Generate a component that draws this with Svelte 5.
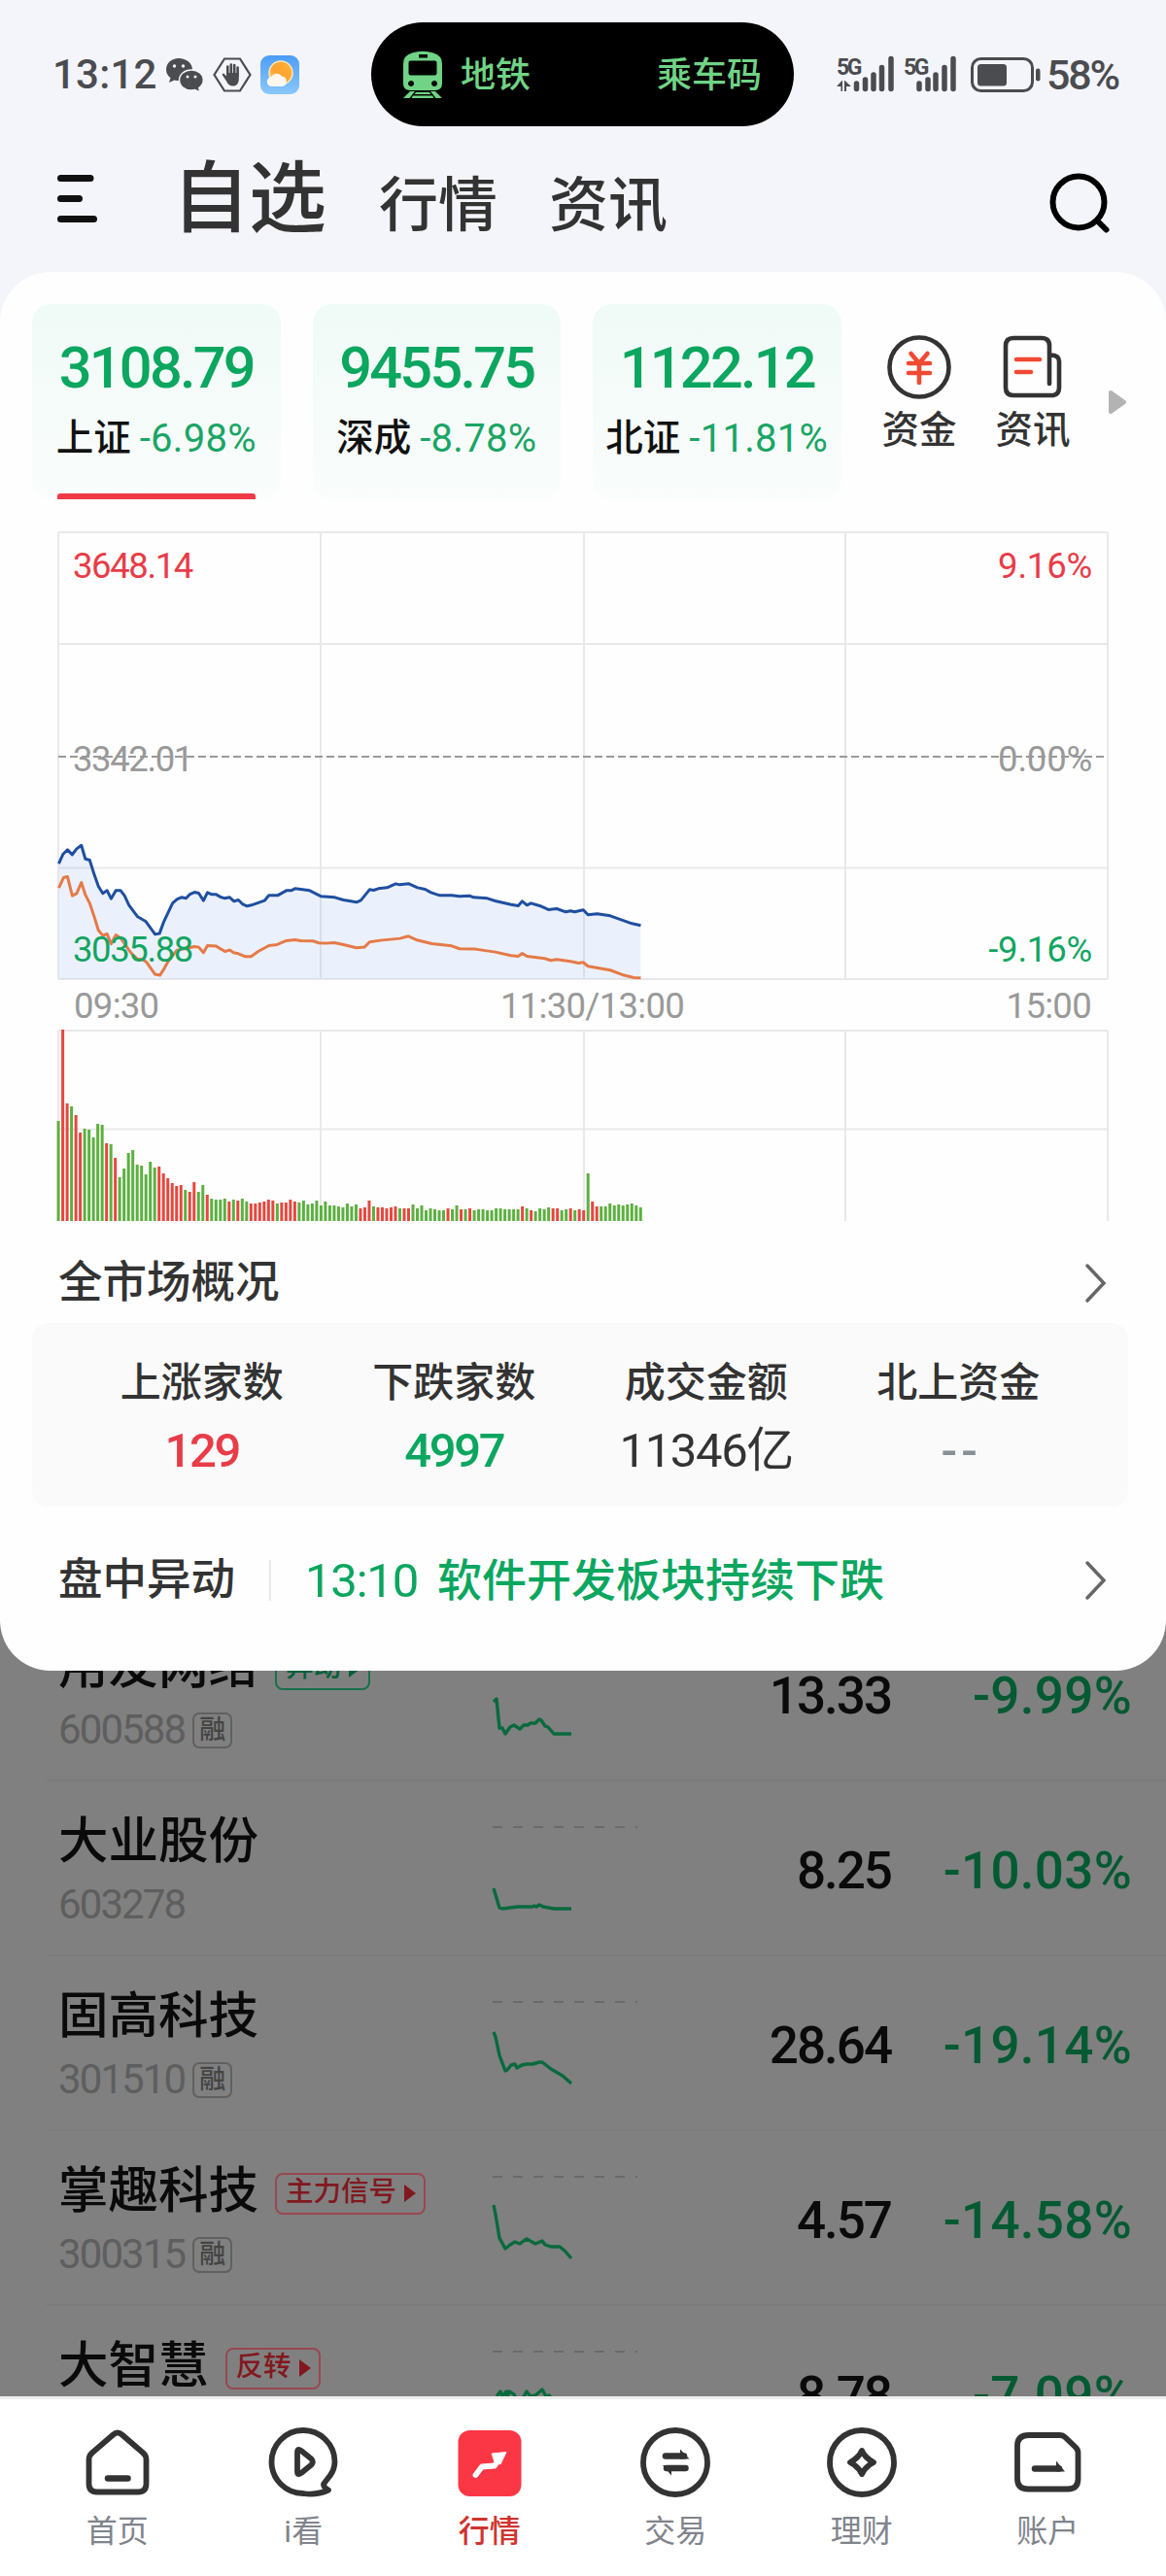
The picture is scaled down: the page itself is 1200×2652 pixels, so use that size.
<script lang="ts">
	const indices = [
		{ name: '上证', value: '3108.79', change: '-6.98%', active: true },
		{ name: '深成', value: '9455.75', change: '-8.78%', active: false },
		{ name: '北证', value: '1122.12', change: '-11.81%', active: false }
	];

	// price and average lines, drawn in their own coordinate space
	const price =
		'49,388 60,358 71,345 83,360 94,342 106,331 116,373 127,377 138,420 149,458 160,480 171,471 181,496 193,471 205,471 215,487 226,516 248,552 268,566 280,586 292,606 303,604 314,567 336,510 347,498 358,492 370,495 380,482 391,476 402,479 414,502 424,477 435,483 446,483 457,491 468,495 480,492 491,504 502,500 513,513 524,519 535,516 568,502 579,486 601,486 623,471 635,471 645,465 682,471 711,489 745,492 767,500 800,507 811,501 833,468 843,470 855,465 877,462 899,450 909,453 932,450 954,462 973,467 988,477 1010,486 1040,486 1060,489 1085,487 1095,492 1130,495 1150,503 1190,514 1208,518 1218,504 1230,516 1240,510 1262,518 1284,530 1305,527 1328,537 1340,534 1350,537 1372,531 1384,546 1407,543 1440,549 1495,573 1517,579';
	const average =
		'49,463 61,431 71,428 83,487 94,480 106,446 116,484 127,510 138,550 149,594 160,610 171,605 181,636 193,608 205,618 215,635 226,655 237,672 248,683 260,683 270,692 292,730 304,733 315,712 326,688 347,655 370,650 391,644 402,646 414,663 424,641 446,643 468,659 480,655 490,663 502,666 520,675 534,675 552,659 579,641 600,638 623,626 645,623 660,626 690,627 705,633 722,634 744,632 767,638 800,648 820,646 833,630 860,625 910,619 931,612 950,623 990,635 1040,642 1060,651 1100,652 1150,661 1190,672 1208,674 1218,665 1230,674 1275,681 1290,687 1305,684 1340,690 1360,695 1372,693 1384,705 1440,717 1470,731 1500,740 1517,741';

	// one bar per minute
	const volume = [
		103, 197, 121, 118, 109, 91, 95, 94, 86, 100, 99, 80, 79, 65, 45, 54, 70, 73, 58, 57, 48, 61, 55,
		56, 49, 44, 39, 36, 37, 32, 30, 40, 30, 37, 27, 23, 22, 22, 23, 20, 22, 21, 23, 20, 18, 18, 19, 20,
		22, 21, 18, 19, 19, 22, 20, 19, 21, 17, 18, 21, 16, 20, 16, 16, 15, 14, 18, 15, 17, 13, 14, 21, 15,
		14, 14, 13, 14, 15, 13, 13, 13, 17, 13, 16, 11, 13, 12, 11, 11, 13, 12, 16, 12, 12, 13, 11, 12, 12,
		11, 11, 13, 13, 12, 12, 12, 12, 15, 13, 11, 10, 13, 12, 14, 13, 13, 11, 12, 13, 11, 12, 11, 49, 20,
		15, 15, 15, 18, 16, 17, 16, 17, 18, 16, 14
	];
	const rising = new Set([
		1, 2, 4, 5, 11, 13, 23, 24, 25, 26, 27, 28, 30, 31, 34, 39, 41, 44, 45, 46, 47, 48, 49, 51, 52, 53,
		54, 69, 70, 71, 73, 74, 75, 76, 77, 79, 80, 89, 92, 94, 106, 108, 113, 114, 117, 119, 120, 122, 123
	]);

	const overview = [
		{ label: '上涨家数', value: '129', tone: 'up' },
		{ label: '下跌家数', value: '4997', tone: 'down' },
		{ label: '成交金额', value: '11346亿', tone: '' },
		{ label: '北上资金', value: '--', tone: 'none' }
	];

	const stocks = [
		{
			name: '用友网络', code: '600588', margin: true, tag: '异动', tone: 'down', price: '13.33', change: '-9.99%',
			spark: '1,98 4,95 7,125 10,125 13,131 18,124 22,122 28,126 32,122 36,122 39,120 44,120 48,116 50,117 54,123 57,124 63,131 81,131'
		},
		{
			name: '大业股份', code: '603278', margin: false, tag: '', tone: '', price: '8.25', change: '-10.03%',
			spark: '1,110 7,130 10,131 26,129 41,129 43,128 45,129 48,127 52,129 63,131 81,131'
		},
		{
			name: '固高科技', code: '301510', margin: true, tag: '', tone: '', price: '28.64', change: '-19.14%',
			spark: '1,78 3,83 7,102 13,118 15,117 19,112 23,111 25,115 30,112 35,111 41,111 48,109 51,109 60,116 72,123 81,131'
		},
		{
			name: '掌趣科技', code: '300315', margin: true, tag: '主力信号', tone: 'up', price: '4.57', change: '-14.58%',
			spark: '1,76 3,86 7,110 13,121 18,117 23,114 28,116 32,113 35,111 44,116 51,113 54,117 60,119 69,119 74,123 81,131'
		},
		{
			name: '大智慧', code: '', margin: false, tag: '反转', tone: 'up', price: '8.78', change: '-7.09%',
			spark: '4,93 8,88 10,93 14,88 15,94 17,88 22,91 24,95 31,95 35,88 39,93 44,92 51,86 55,93 58,92 61,95'
		}
	];

	const tabs = ['首页', 'i看', '行情', '交易', '理财', '账户'];
	const current = 2;
</script>

{#snippet chevron()}
	<svg class="chevron" width="24" height="42" viewBox="0 0 24 42">
		<path d="M3 3 L20 21 L3 39" />
	</svg>
{/snippet}

<div class="phone">
	<div class="status">
		<div class="status-left">
			<span class="clock">13:12</span>
			<svg class="wechat" width="40" height="36" viewBox="0 0 40 36">
				<path d="M14 1C6.500 1 1 6 1 12.500c0 3.700 1.800 6.700 4.500 8.800L4 26l5.500-2.600c1.400.4 2.900.6 4.500.6C21 24 28 19 28 12.500S21.500 1 14 1z" />
				<path class="front" d="M27 13c-7 0-12.500 4.600-12.500 10.500S20 34 27 34c1.300 0 2.500-.2 3.600-.5L36 36l-1.200-4.500c2.700-1.900 4.500-4.700 4.500-8C39.300 17.600 34 13 27 13z" />
				<g class="eyes">
					<circle cx="9.500" cy="9" r="1.700" /><circle cx="18.500" cy="9" r="1.700" />
					<circle cx="23" cy="20" r="1.500" /><circle cx="31" cy="20" r="1.500" />
				</g>
			</svg>
			<svg class="hand" width="40" height="36" viewBox="0 0 40 36">
				<path class="hex" d="M12 1.500h16L38.500 18 28 34.500H12L1.500 18z" />
				<path class="fingers" d="M15.300 19V9.500M18.800 18V7.500M22.200 18V8M25.600 19v-8.500M15.500 23l-4.500-5" />
				<path class="palm" d="M14.200 16h12.600v6c0 5-2.300 7.500-6 7.500-3.500 0-5.200-1.700-6.500-4.500L11 20l3.200 1z" />
			</svg>
			<svg width="40" height="40" viewBox="0 0 40 40">
				<defs>
					<linearGradient id="sky" x1="0" y1="0" x2="0" y2="1">
						<stop offset="0" stop-color="#4d9df7" /><stop offset="1" stop-color="#8ac8fb" />
					</linearGradient>
					<linearGradient id="sun" x1="1" y1="0" x2="0" y2="1">
						<stop offset="0" stop-color="#ffb32e" /><stop offset="0.600" stop-color="#ffa234" /><stop offset="1" stop-color="#ffe6a0" />
					</linearGradient>
				</defs>
				<rect width="40" height="40" rx="9" fill="url(#sky)" />
				<circle cx="21" cy="18" r="12" fill="url(#sun)" stroke="#ffe8b8" stroke-width="1.500" />
				<path d="M12 32a5 5 0 0 1-.5-10 6 6 0 0 1 10.500-.5 5.300 5.300 0 0 1 .5 10.500z" fill="#fff8ee" />
			</svg>
		</div>
		<div class="island">
			<svg width="42" height="50" viewBox="0 0 42 50">
				<path fill-rule="evenodd" d="M10 2.500Q21-1 32 2.500Q41 5 41 14V34Q41 41 34 41H8Q1 41 1 34V14Q1 5 10 2.500zM17 4v3.500h9V4zM6.500 12.500v11q0 2 2 2h25q2 0 2-2v-11q0-2-2-2h-25q-2 0-2 2zM9 31a3 3 0 1 0 .1 0zM33 31a3 3 0 1 0 .1 0z" />
				<path d="M8 42h5l-5.500 7H1zM34 42h-5l5.500 7H41zM14 43h14l1.500 2h-17zM11 46.500h20l1.500 2.500h-23z" />
			</svg>
			<span>地铁</span>
			<span class="ride">乘车码</span>
		</div>
		<div class="status-right">
			<svg width="61" height="38" viewBox="0 0 61 38">
				<text x="0" y="18.500">5G</text>
				<path class="arrows" d="M0 31l6-6.500V36H4.500v-5zM8 24.500V36h2v-5h5z" />
				<path class="bars" d="M20.500 28v5.500M29.500 24v9.500M38 19v14.500M46.500 11.500v22M56 2.500v31" />
			</svg>
			<svg class="sim2" width="57" height="38" viewBox="0 0 57 38">
				<text x="0" y="18.500">5G</text>
				<path class="bars" d="M16 28v5.500M25 24v9.500M33 19v14.500M42 11.500v22M51 2.500v31" />
			</svg>
			<svg class="battery" width="73" height="38" viewBox="0 0 73 38">
				<rect class="case" x="1.500" y="2.500" width="62" height="33" rx="9" />
				<rect x="7" y="8" width="30" height="22.500" rx="3.500" />
				<rect x="67" y="12.500" width="4.500" height="13" rx="2.200" />
			</svg>
			<span class="percent">58%</span>
		</div>
	</div>

	<header>
		<svg width="42" height="50" viewBox="0 0 42 50">
			<path class="menu" d="M5.500 4.500h30.500M5.500 25.500h19M5.500 46.500h34" />
		</svg>
		<h1>自选</h1>
		<span class="section">行情</span>
		<span class="section">资讯</span>
		<svg class="search" width="64" height="64" viewBox="0 0 64 64">
			<circle cx="31" cy="31" r="26.500" />
			<path d="M51 51l8.500 8.500" />
		</svg>
	</header>

	<div class="backdrop">
		<section class="sheet">
			<div class="indices">
				{#each indices as item}
					<div class="index" class:active={item.active}>
						<div class="index-value">{item.value}</div>
						<div class="index-line">
							<span>{item.name}</span>
							<b>{item.change}</b>
						</div>
					</div>
				{/each}
				<div class="shortcut first">
					<svg width="70" height="70" viewBox="0 0 70 70">
						<circle class="line" cx="35" cy="35" r="30.500" />
						<path class="accent" d="M26.500 21L35 31l8.500-10M24 31h22M24 41h22M35 31v20" />
					</svg>
					<span>资金</span>
				</div>
				<div class="shortcut">
					<svg width="70" height="70" viewBox="0 0 70 70">
						<path class="line" d="M52 52V13q0-8-8-8H15q-8 0-8 8v43q0 8 8 8h41q6-1 6-8V29q0-6-8-6.500" />
						<path class="accent" d="M18 27h24M18 40h15" />
					</svg>
					<span>资讯</span>
				</div>
				<svg class="more" width="20" height="26" viewBox="0 0 20 26">
					<path d="M3 3v20L17 13z" />
				</svg>
			</div>

			<div class="chart">
				<svg width="1082" height="712" viewBox="0 0 1082 712">
					<path class="grid" d="M0 1H1080M0 116H1080M0 346.500H1080M0 461H1080M0 1V461M270 1V461M541 1V461M810 1V461M1080 1V461" />
					<path class="grid" d="M0 514H1080M0 615.500H1080M0 514V710M270 514V710M541 514V710M810 514V710M1080 514V710" />
					<path class="zero" d="M0 232H1080" />
					<g transform="translate(-19.500 213) scale(0.408 0.333)">
						<polygon class="area" points="49,744 {price} 1517,744" />
						<polyline class="average" points={average} />
						<polyline class="price" points={price} />
					</g>
					{#each volume as v, i}
						<rect class={rising.has(i) ? 'vol-up' : 'vol-down'} x={i * 4.505 - 1.4} y={710 - v} width="3" height={v} />
					{/each}
					<g class="labels">
						<text class="up" x="15" y="47.500">3648.14</text>
						<text class="up ratio" x="1064" y="47.500" text-anchor="end">9.16%</text>
						<text x="15" y="247">3342.01</text>
						<text class="ratio" x="1064" y="247" text-anchor="end">0.00%</text>
						<text class="down" x="15" y="443">3035.88</text>
						<text class="down ratio" x="1064" y="443" text-anchor="end">-9.16%</text>
						<text class="axis" x="16" y="501">09:30</text>
						<text class="axis" x="549.500" y="501" text-anchor="middle">11:30/13:00</text>
						<text class="axis" x="1063" y="501" text-anchor="end">15:00</text>
					</g>
				</svg>
			</div>

			<div class="row-head">
				<h2>全市场概况</h2>
				{@render chevron()}
			</div>

			<div class="overview">
				{#each overview as cell}
					<div class="cell">
						<span>{cell.label}</span>
						<b class={cell.tone}>{cell.value}</b>
					</div>
				{/each}
			</div>

			<div class="row-head news">
				<h2>盘中异动</h2>
				<i></i>
				<span class="time">13:10</span>
				<span class="headline">软件开发板块持续下跌</span>
				{@render chevron()}
			</div>
		</section>
	</div>

	<div class="list">
		{#each stocks as stock}
			<div class="stock">
				<div class="who">
					<div class="name">
						<span>{stock.name}</span>
						{#if stock.tag}
							<em class={stock.tone}>
								{stock.tag}
								<svg width="13" height="18" viewBox="0 0 13 18"><path d="M1 0v18l12-9z" /></svg>
							</em>
						{/if}
					</div>
					{#if stock.code}
						<div class="code">
							<span>{stock.code}</span>
							{#if stock.margin}<small>融</small>{/if}
						</div>
					{/if}
				</div>
				<svg class="spark" width="150" height="178" viewBox="0 0 150 178">
					<path d="M0 47H149" />
					<polyline points={stock.spark} />
				</svg>
				<div class="last">{stock.price}</div>
				<div class="change">{stock.change}</div>
			</div>
		{/each}
	</div>

	<nav>
		{#each tabs as tab, i}
			<div class="tab" class:current={i === current}>
				<svg width="80" height="80" viewBox="0 0 80 80">
					{#if i === 0}
						<path d="M35.500 11.500Q40 7.500 44.500 11.500L66 30Q69.500 33 69.500 37V62Q69.500 70.500 61 70.500H19Q10.500 70.500 10.500 62V37Q10.500 33 14 30Z" />
						<path class="thick" d="M30 56.500H50.500" />
					{:else if i === 1}
						<path d="M61 62.500C65 56 72.500 51 72.500 39A32.500 32.500 0 1 0 40 72Q54 74 66 68.500Q61 66 61 62.500Z" />
						<path d="M34 29.500Q34 25 38 28L48.500 36.500Q51 39.500 48.500 42.500L38 51Q34 54 34 49.500Z" />
					{:else if i === 2}
						<rect class="fill" x="7.500" y="7" width="65" height="68" rx="12" />
						<path class="arrow" d="M25.500 53L32 44.500L45 43.500L50 36" />
						<path class="arrow-head" d="M42.500 31L57 29.500L51 42L45 39z" />
					{:else if i === 3}
						<circle cx="40" cy="40" r="33" />
						<path class="thick" d="M30 33.500H49M31 46H50.500" />
						<path class="solid" d="M45 26.500L54.500 36.500H45zM36 53.500L27 43H36z" />
					{:else if i === 4}
						<circle cx="40" cy="40" r="33" />
						<path d="M40 28Q43 35 52 40Q43 45 40 52Q37 45 28 40Q37 35 40 28Z" />
					{:else}
						<path d="M21 12H53Q56 12 58 14L69 24.500Q71.500 27 71.500 30V57Q71.500 67.500 61 67.500H20Q9 67.500 9 57V23Q9 12 21 12Z" />
						<path class="thick" d="M27 46.500H52" />
						<path class="solid" d="M49 38.500L58 49.500H49z" />
					{/if}
				</svg>
				<span>{tab}</span>
			</div>
		{/each}
	</nav>
</div>

<style>
	:global(body) {
		margin: 0;
	}

	.phone {
		width: 1200px;
		height: 2652px;
		overflow: hidden;
		display: flex;
		flex-direction: column;
		background: #f4f5fa;
		color: #333;
		font-family: Roboto, 'Noto Sans CJK SC', sans-serif;
		line-height: 1;
	}

	h1,
	h2 {
		margin: 0;
		font-weight: 500;
	}

	svg {
		display: block;
		flex: none;
		overflow: visible;
	}

	b,
	em,
	i {
		font-weight: inherit;
		font-style: normal;
	}

	/* status bar */
	.status {
		height: 153px;
		display: flex;
		align-items: center;
		color: #4b4c50;
		fill: #4b4c50;
	}

	.status-left {
		width: 328px;
		padding-left: 54px;
		display: flex;
		align-items: center;
	}

	.clock {
		width: 116px;
		padding-top: 1px;
		font-size: 42px;
		font-weight: 500;
		letter-spacing: 0.2px;
	}

	.wechat .front {
		stroke: #f4f5fa;
		stroke-width: 1.5;
	}

	.wechat .eyes {
		fill: #f4f5fa;
	}

	.hand {
		margin: 0 9px;
	}

	.hex,
	.fingers {
		fill: none;
		stroke: #4b4c50;
		stroke-width: 2.2;
	}

	.fingers {
		stroke-width: 2.6;
		stroke-linecap: round;
	}

	.island {
		width: 435px;
		height: 107px;
		box-sizing: border-box;
		padding: 0 33px 0 32px;
		border-radius: 54px;
		display: flex;
		align-items: center;
		background: #000;
		color: #70d386;
		fill: #70d386;
		font-size: 36px;
		font-weight: 500;
	}

	.island span {
		margin-left: 18px;
		padding-top: 3px;
	}

	.island .ride {
		margin-left: auto;
	}

	.status-right {
		padding-left: 44px;
		display: flex;
		align-items: center;
	}

	.status-right text {
		font-size: 23px;
		font-weight: 700;
		letter-spacing: -2.5px;
	}

	.bars {
		stroke: #4b4c50;
		stroke-width: 5.5;
		stroke-linecap: round;
	}

	.sim2 {
		margin-left: 8px;
	}

	.battery {
		margin: 0 5px 0 12px;
	}

	.case {
		fill: none;
		stroke: #4b4c50;
		stroke-width: 3;
	}

	.percent {
		padding-top: 1px;
		font-size: 43px;
		font-weight: 500;
		letter-spacing: -2.2px;
	}

	/* header */
	header {
		height: 127px;
		padding: 0 57px;
		display: flex;
		align-items: flex-start;
	}

	header > svg {
		margin-top: 26px;
	}

	.menu {
		stroke: #111;
		stroke-width: 7;
		stroke-linecap: round;
	}

	h1 {
		margin: 12px 55px 0 78px;
		font-size: 80px;
		letter-spacing: -1px;
	}

	.section {
		margin: 29px 53px 0 0;
		font-size: 61px;
		font-weight: 500;
	}

	header .search {
		margin: 24px 0 0 auto;
		fill: none;
		stroke: #000;
		stroke-width: 6;
		stroke-linecap: round;
	}

	/* sheet */
	.backdrop {
		flex: none;
		height: 1440px;
		background: linear-gradient(#f4f5fa 50%, #808080 50%);
	}

	.sheet {
		height: 1440px;
		box-sizing: border-box;
		padding-top: 33px;
		border-radius: 52px;
		background: #fefefe;
	}

	.indices {
		display: flex;
		margin-left: 33px;
	}

	.index {
		position: relative;
		width: 255.5px;
		height: 201px;
		margin-right: 33px;
		border-radius: 20px;
		background: linear-gradient(#f0faf6, #fafdfc);
		text-align: center;
	}

	.index.active::after {
		content: '';
		position: absolute;
		left: 26px;
		right: 26px;
		bottom: 0;
		height: 6px;
		border-radius: 3px 3px 0 0;
		background: #f03a45;
	}

	.index-value {
		margin-top: 37px;
		color: #0ba65f;
		font-size: 59.5px;
		font-weight: 500;
		letter-spacing: -2.8px;
	}

	.index-line {
		display: flex;
		justify-content: center;
		align-items: center;
		gap: 9px;
		margin-top: 22px;
		color: #111;
		font-size: 38.5px;
		font-weight: 500;
		white-space: nowrap;
	}

	.index-line b {
		color: #1aa565;
		font-size: 40px;
		font-weight: 400;
		letter-spacing: 0.3px;
	}

	.shortcut {
		width: 117px;
		padding-top: 30px;
		display: flex;
		flex-direction: column;
		align-items: center;
		font-size: 38.5px;
		font-weight: 500;
	}

	.shortcut.first {
		margin-left: -11px;
	}

	.shortcut span {
		margin-top: 11px;
	}

	.line,
	.accent {
		fill: none;
		stroke: #333;
		stroke-width: 4.6;
		stroke-linecap: round;
	}

	.accent {
		stroke: #f04a32;
	}

	.more {
		margin: 88px 0 0 18px;
		fill: #b3b3b3;
		stroke: #b3b3b3;
		stroke-width: 4;
		stroke-linejoin: round;
	}

	/* chart */
	.chart {
		margin: 33px 0 0 60px;
	}

	.grid {
		fill: none;
		stroke: #e9e9e9;
		stroke-width: 2;
	}

	.zero {
		stroke: #999;
		stroke-width: 2;
		stroke-dasharray: 8 4;
	}

	.area {
		fill: rgba(70, 130, 240, 0.1);
	}

	.price,
	.average {
		fill: none;
		stroke: #1f4f9f;
		stroke-width: 3;
		vector-effect: non-scaling-stroke;
		stroke-linejoin: round;
	}

	.average {
		stroke: #e57a48;
	}

	.vol-up {
		fill: #e5483f;
	}

	.vol-down {
		fill: #5cb040;
	}

	.labels {
		fill: #999;
		font-size: 36.5px;
		letter-spacing: -1.4px;
	}

	.labels .ratio {
		letter-spacing: -0.2px;
	}

	.labels .axis {
		letter-spacing: -0.7px;
	}

	.labels .up {
		fill: #e83c48;
	}

	.labels .down {
		fill: #13a562;
	}

	/* market overview */
	.row-head {
		height: 103px;
		padding: 21px 60px 0;
		box-sizing: border-box;
		display: flex;
		align-items: center;
		justify-content: space-between;
	}

	h2 {
		font-size: 45.5px;
		font-weight: 500;
	}

	.chevron {
		fill: none;
		stroke: #666;
		stroke-width: 3.5;
		stroke-linecap: round;
	}

	.overview {
		height: 189px;
		margin: 0 39px 0 33px;
		box-sizing: border-box;
		padding: 41px 45px 0;
		border-radius: 16px;
		background: #fafafa;
		display: grid;
		grid-template-columns: repeat(4, 1fr);
	}

	.cell {
		display: flex;
		flex-direction: column;
		align-items: center;
		font-size: 42px;
		font-weight: 500;
	}

	.cell b {
		margin-top: 24px;
		font-size: 49px;
		font-weight: 400;
		letter-spacing: -1.4px;
	}

	.cell .up,
	.cell .down {
		color: #e83c48;
		font-weight: 500;
		letter-spacing: -2.4px;
	}

	.cell .down {
		color: #0ba65f;
	}

	.cell .none {
		color: #8a8f96;
		font-weight: 500;
		letter-spacing: 4px;
		padding-left: 6px;
	}

	.news {
		height: 150px;
		padding-top: 2px;
		justify-content: flex-start;
	}

	.news i {
		width: 2px;
		height: 42px;
		margin: 0 35px;
		background: #e8e8e8;
	}

	.time {
		width: 136px;
		color: #0ba65f;
		font-size: 49px;
		letter-spacing: -1.2px;
	}

	.headline {
		color: #0ba65f;
		font-size: 46px;
		font-weight: 500;
	}

	.news .chevron {
		margin-left: auto;
	}

	/* watch list, dimmed under the sheet */
	.list {
		height: 747px;
		flex: none;
		overflow: hidden;
		background: #808080;
		color: #0a0a0a;
	}

	.stock {
		height: 180px;
		margin-left: 48px;
		padding-left: 12px;
		box-sizing: border-box;
		border-bottom: 2px solid #7b7b7b;
		display: flex;
	}

	.stock:first-child {
		margin-top: -66px;
	}

	.who {
		width: 447px;
	}

	.name {
		display: flex;
		align-items: center;
		height: 52px;
		margin-top: 36px;
		font-size: 51.5px;
		font-weight: 500;
	}

	.name em {
		height: 43px;
		box-sizing: border-box;
		margin: 4px 0 0 17px;
		padding: 0 8px 1px 9px;
		border: 2px solid #984850;
		border-radius: 8px;
		display: flex;
		align-items: center;
		gap: 7px;
		color: #82181f;
		fill: #82181f;
		font-size: 28.5px;
	}

	.name em.down {
		border-color: #16714a;
		color: #06603a;
		fill: #06603a;
	}

	.code {
		display: flex;
		align-items: center;
		height: 38px;
		margin-top: 20px;
		color: #5e5e5e;
		font-size: 42px;
		letter-spacing: -1.9px;
	}

	.code small {
		width: 41px;
		height: 37px;
		box-sizing: border-box;
		margin-left: 8px;
		border: 2px solid #606060;
		border-radius: 7px;
		color: #444;
		font-size: 27px;
		font-weight: 500;
		line-height: 32px;
		letter-spacing: 0;
		text-align: center;
	}

	.spark {
		fill: none;
		stroke: #086a3e;
		stroke-width: 3.4;
		stroke-linejoin: round;
	}

	.spark path {
		stroke: #6a6a6a;
		stroke-width: 2;
		stroke-dasharray: 10 11;
	}

	.last,
	.change {
		margin-top: 66px;
		font-size: 53px;
		font-weight: 500;
		text-align: right;
	}

	.last {
		width: 260px;
		letter-spacing: -2px;
	}

	.change {
		width: 248px;
		color: #045a33;
		letter-spacing: 0.3px;
	}

	/* tab bar */
	nav {
		height: 182px;
		flex: none;
		padding: 0 26px 0 25px;
		border-top: 3px solid #efefef;
		background: #fff;
		display: flex;
	}

	.tab {
		flex: 1;
		padding-top: 25px;
		display: flex;
		flex-direction: column;
		align-items: center;
		color: #80848c;
		font-size: 32px;
	}

	.tab svg {
		fill: none;
		stroke: #333;
		stroke-width: 5.8;
		stroke-linejoin: round;
		stroke-linecap: round;
	}

	.tab span {
		margin-top: 15px;
	}

	.tab .thick {
		stroke-width: 6.5;
	}

	.tab .solid {
		fill: #333;
		stroke: none;
	}

	.tab .fill {
		fill: #fb3745;
		stroke: none;
	}

	.tab .arrow {
		stroke: #fff;
	}

	.tab .arrow-head {
		fill: #fff;
		stroke: #fff;
		stroke-width: 1;
	}

	.tab.current {
		color: #d0342f;
		font-weight: 500;
	}
</style>
